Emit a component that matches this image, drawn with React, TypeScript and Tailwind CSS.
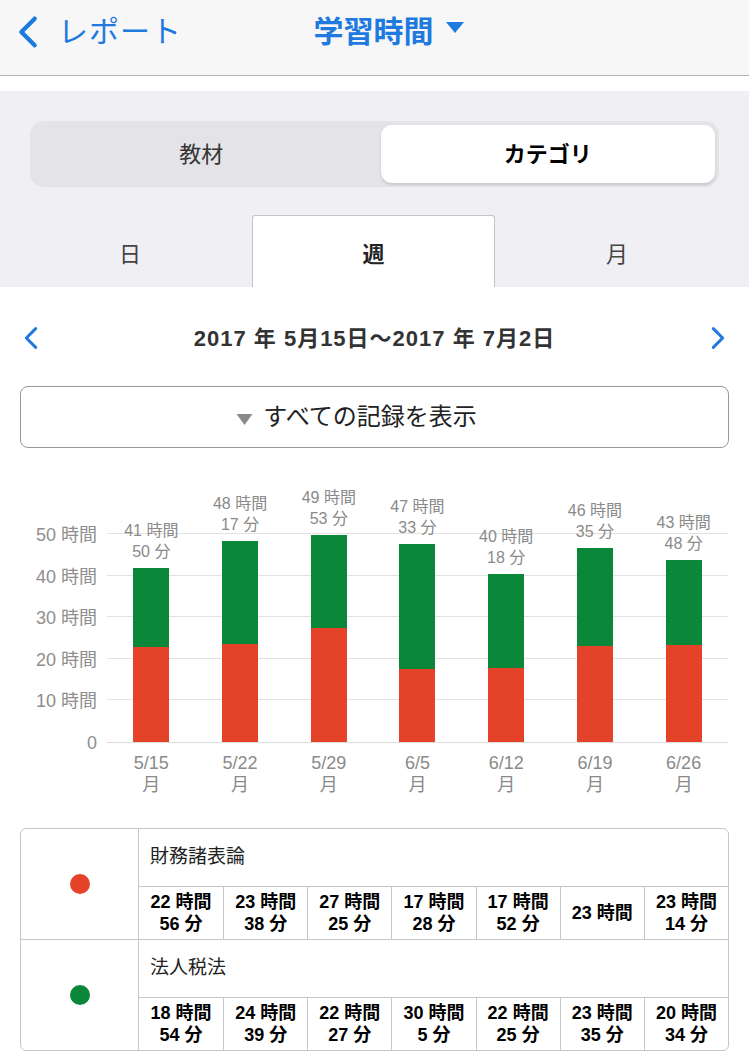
import { useState } from "react";

const weeks = [
  { date: "5/15", red: 22 + 56 / 60, green: 18 + 54 / 60, total: ["41時間", "50分"] },
  { date: "5/22", red: 23 + 38 / 60, green: 24 + 39 / 60, total: ["48時間", "17分"] },
  { date: "5/29", red: 27 + 25 / 60, green: 22 + 27 / 60, total: ["49時間", "53分"] },
  { date: "6/5", red: 17 + 28 / 60, green: 30 + 5 / 60, total: ["47時間", "33分"] },
  { date: "6/12", red: 17 + 52 / 60, green: 22 + 25 / 60, total: ["40時間", "18分"] },
  { date: "6/19", red: 23, green: 23 + 35 / 60, total: ["46時間", "35分"] },
  { date: "6/26", red: 23 + 14 / 60, green: 20 + 34 / 60, total: ["43時間", "48分"] },
];

const PX_PER_HOUR = 4.16;

const subjects = [
  {
    name: "財務諸表論",
    color: "bg-[#e4432a]",
    values: [["22時間", "56分"], ["23時間", "38分"], ["27時間", "25分"], ["17時間", "28分"], ["17時間", "52分"], ["23時間"], ["23時間", "14分"]],
  },
  {
    name: "法人税法",
    color: "bg-[#0b873a]",
    values: [["18時間", "54分"], ["24時間", "39分"], ["22時間", "27分"], ["30時間", "5分"], ["22時間", "25分"], ["23時間", "35分"], ["20時間", "34分"]],
  },
];

const font = "font-['Liberation_Sans','Noto_Sans_CJK_JP',sans-serif]";

function Chevron({ dir, className }: { dir: "left" | "right"; className?: string }) {
  return (
    <svg viewBox="0 0 12 20" className={className} fill="none" stroke="currentColor" strokeWidth={2.6} strokeLinecap="round" strokeLinejoin="round">
      {dir === "left" ? <path d="M10 2 L2 10 L10 18" /> : <path d="M2 2 L10 10 L2 18" />}
    </svg>
  );
}

export default function App() {
  const [seg, setSeg] = useState(1);
  const [tab, setTab] = useState(1);

  return (
    <div className={`w-[749px] min-h-[1063px] bg-white ${font}`}>
      {/* nav bar */}
      <div className="h-[76px] bg-[#f7f7f7] border-b border-[#b4b4b4] grid grid-cols-[1fr_auto_1fr] items-start pt-[12px]">
        <div className="flex items-center gap-[20px] pl-[18px] text-[#1f7ae0]">
          <Chevron dir="left" className="w-[20px] h-[38px]" />
          <span className="text-[30px] leading-[40px] tracking-[1px]">レポート</span>
        </div>
        <div className="flex items-center gap-[12px] pl-[28px] text-[#1f7ae0]">
          <span className="text-[30px] leading-[40px] font-bold">学習時間</span>
          <svg viewBox="0 0 18 11" className="w-[18px] h-[11px] -mt-[10px]">
            <path d="M0 0 H18 L9 11 Z" fill="currentColor" />
          </svg>
        </div>
        <div />
      </div>
      <div className="h-[15px] bg-white" />

      {/* gray area */}
      <div className="bg-[#efeff4] pt-[30px]">
        <div className="mx-[30px] h-[66px] rounded-[14px] bg-[#e3e3e8] p-[4px] flex">
          {["教材", "カテゴリ"].map((t, i) => (
            <button
              key={t}
              onClick={() => setSeg(i)}
              className={`flex-1 rounded-[11px] text-[22px] ${seg === i ? "bg-white font-bold text-black shadow-[0_2px_3px_rgba(0,0,0,0.12)] ml-[6px]" : "text-[#333] pr-[6px]"}`}
            >
              {t}
            </button>
          ))}
        </div>
        <div className="flex mt-[28px] h-[72px]">
          {["日", "週", "月"].map((t, i) => (
            <button
              key={t}
              onClick={() => setTab(i)}
              className={`${i === 0 ? "w-[252px] pl-[8px]" : i === 1 ? "w-[243px]" : "flex-1 pr-[10px]"} text-[22px] pt-[6px] ${
                tab === i ? "bg-white border border-b-0 border-[#c4c4c4] rounded-t-[3px] font-bold text-[#222]" : "text-[#444]"
              }`}
            >
              {t}
            </button>
          ))}
        </div>
      </div>

      {/* date range */}
      <div className="mt-[26px] h-[50px] flex items-center justify-between px-[24px]">
        <Chevron dir="left" className="w-[14px] h-[24px] text-[#1f7ae0]" />
        <span className="text-[22px] font-bold text-[#333] tracking-[1px]">2017 年 5月15日〜2017 年 7月2日</span>
        <Chevron dir="right" className="w-[14px] h-[24px] text-[#1f7ae0]" />
      </div>

      {/* show all */}
      <div className="mt-[23px] mx-[20px] h-[62px] border-[1.5px] border-[#999] rounded-[8px] flex items-center justify-center gap-[10px] pr-[36px]">
        <svg viewBox="0 0 16 11" className="w-[17px] h-[11px] mt-[4px]">
          <path d="M0 0 H16 L8 11 Z" fill="#8a8a8a" />
        </svg>
        <span className="text-[24px] text-[#222]">すべての記録を表示</span>
      </div>

      {/* chart */}
      <div className="mt-[35px] flex">
        <div className="w-[107px] relative h-[260px] text-[18px] text-[#8e8e8e]">
          {[0, 10, 20, 30, 40, 50].map((h) => (
            <span
              key={h}
              className="absolute right-[10px] translate-y-1/2 leading-[20px] whitespace-nowrap"
              style={{ bottom: h * PX_PER_HOUR }}
            >
              {h === 0 ? "0" : `${h} 時間`}
            </span>
          ))}
        </div>
        <div className="w-[621px]">
          <div className="relative h-[260px] border-b border-[#dcdcdc]">
            {[10, 20, 30, 40, 50].map((h) => (
              <div key={h} className="absolute left-0 right-0 h-px bg-[#e2e2e2]" style={{ bottom: h * PX_PER_HOUR }} />
            ))}
            <div className="relative h-full grid grid-cols-7 items-end">
              {weeks.map((w) => (
                <div key={w.date} className="flex flex-col items-center">
                  <div className="text-[16px] leading-[21px] text-[#8a8a8a] text-center mb-[6px] whitespace-nowrap">
                    <div>{w.total[0].replace("時間", " 時間")}</div>
                    <div>{w.total[1].replace("分", " 分")}</div>
                  </div>
                  <div className="w-[36px] flex flex-col">
                    <div className="bg-[#0b873a]" style={{ height: w.green * PX_PER_HOUR }} />
                    <div className="bg-[#e4432a]" style={{ height: w.red * PX_PER_HOUR }} />
                  </div>
                </div>
              ))}
            </div>
          </div>
          <div className="grid grid-cols-7 pt-[9px] text-[18px] leading-[22px] text-[#8a8a8a] text-center">
            {weeks.map((w) => (
              <div key={w.date}>
                <div>{w.date}</div>
                <div>月</div>
              </div>
            ))}
          </div>
        </div>
      </div>

      {/* table */}
      <div className="mt-[32px] mx-[20px] border-[1.5px] border-[#c6c6c6] rounded-[6px] overflow-hidden">
        {subjects.map((s, si) => (
          <div key={s.name} className={`flex ${si === 0 ? "border-b border-[#c6c6c6]" : ""}`}>
            <div className="w-[118px] border-r border-[#c6c6c6] flex items-center justify-center">
              <div className={`w-[20px] h-[20px] rounded-full ${s.color}`} />
            </div>
            <div className="flex-1">
              <div className="h-[58px] flex items-center pl-[11px] text-[19px] text-[#222] border-b border-[#c6c6c6]">{s.name}</div>
              <div className="h-[52px] grid grid-cols-7">
                {s.values.map((v, i) => (
                  <div
                    key={i}
                    className={`flex flex-col items-center justify-center text-[18px] leading-[22px] font-bold text-black ${i > 0 ? "border-l border-[#c6c6c6]" : ""}`}
                  >
                    {v.map((line) => (
                      <span key={line}>{line.replace("時間", " 時間").replace(/(\d)分/, "$1 分")}</span>
                    ))}
                  </div>
                ))}
              </div>
            </div>
          </div>
        ))}
      </div>
    </div>
  );
}
